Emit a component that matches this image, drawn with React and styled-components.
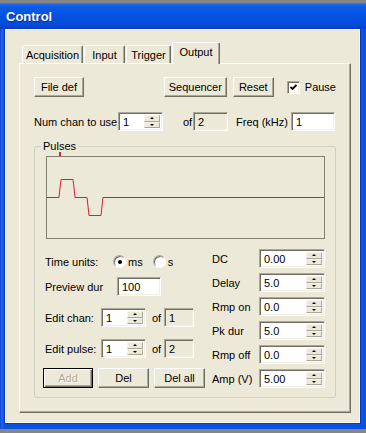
import React from "react";
import styled, { createGlobalStyle, css } from "styled-components";

const FONT = `"Liberation Sans", Arial, sans-serif`;

const GlobalStyle = createGlobalStyle`
  html, body {
    margin: 0;
    padding: 0;
    background: #868686;
  }
  body {
    font-family: ${FONT};
    font-size: 11px;
    color: #000;
  }
`;

const raised = css`
  border: 1px solid;
  border-color: #fff #716f64 #716f64 #fff;
  box-shadow: inset -1px -1px #aca899;
`;

const sunken = css`
  box-sizing: border-box;
  border: 1px solid;
  border-color: #aca899 #fff #fff #aca899;
  box-shadow: inset 1px 1px #716f64, inset -1px -1px #f1efe2;
`;

const Page = styled.div`
  width: 366px;
  height: 433px;
  padding-top: 3px;
  box-sizing: border-box;
  background: #868686;
`;

const TitleBar = styled.div`
  height: 26px;
  display: flex;
  align-items: center;
  padding-left: 6px;
  background: linear-gradient(
    #3679ee 0,
    #0c5ce8 3px,
    #0553e2 12px,
    #044ad9 22px,
    #0642c8 26px
  );
  color: #fff;
  font: bold 13px ${FONT};
  text-shadow: 1px 1px #0c2a9a;
`;

const Frame = styled.div`
  padding: 0 6px 6px 5px;
  background: linear-gradient(90deg, #0a47d4 0, #2466ee 2px, #0b52e2 4px);
`;

const Client = styled.div`
  background: #ece9d8;
  border: 1px solid #fbfaf4;
  box-shadow: 0 0 0 1px #0a39c0;
  padding: 12px 7px 9px 13px;
`;

const TabStrip = styled.div`
  display: flex;
  align-items: flex-end;
  gap: 1px;
  height: 21px;
  padding-left: 3px;
`;

const Tab = styled.div`
  box-sizing: border-box;
  width: ${(p) => p.$w}px;
  height: 18px;
  display: flex;
  align-items: center;
  justify-content: center;
  background: #ece9d8;
  border: 1px solid;
  border-bottom: none;
  border-color: #fff #716f64 transparent #fff;
  border-radius: 2px 2px 0 0;
  box-shadow: inset -1px 0 #aca899;
  white-space: nowrap;

  ${(p) =>
    p.$active &&
    css`
      position: relative;
      z-index: 1;
      height: 22px;
      margin-bottom: -1px;
      padding-bottom: 3px;
    `}
`;

const Panel = styled.div`
  box-sizing: border-box;
  width: 332px;
  ${raised}
  padding: 13px 14px 14px 14px;
`;

const Row = styled.div`
  display: flex;
  align-items: center;
  height: ${(p) => p.$h || 19}px;
  margin-top: ${(p) => p.$mt || 0}px;
`;

const Label = styled.span`
  display: inline-block;
  width: ${(p) => (p.$w ? `${p.$w}px` : "auto")};
  margin-left: ${(p) => p.$ml || 0}px;
  white-space: nowrap;
`;

const Button = styled.button`
  box-sizing: border-box;
  width: ${(p) => p.$w}px;
  height: 20px;
  padding: 0;
  margin-left: ${(p) => p.$ml || 0}px;
  font: 11px ${FONT};
  color: #000;
  background: #ece9d8;
  ${raised}

  &:disabled {
    color: #aca899;
    text-shadow: 1px 1px #fff;
    border-color: #000;
    box-shadow: inset 1px 1px #fff, inset -1px -1px #716f64,
      inset -2px -2px #aca899;
  }
`;

const RightGroup = styled.div`
  display: flex;
  align-items: center;
  margin-left: auto;
`;

const Check = styled.span`
  ${sunken}
  width: 13px;
  height: 13px;
  background: #fff;
  display: inline-flex;
  align-items: center;
  justify-content: center;
  margin: 0 5px 0 13px;
`;

const Field = styled.input`
  ${sunken}
  width: ${(p) => p.$w}px;
  height: 19px;
  margin: 0;
  padding: 0 0 0 4px;
  font: 11px ${FONT};
  color: #000;
  background: ${(p) => (p.readOnly ? "#ece9d8" : "#fff")};
  outline: none;
`;

const SpinBox = styled.div`
  ${sunken}
  width: ${(p) => p.$w}px;
  height: 19px;
  display: flex;
  background: #fff;
  padding: 2px;
`;

const SpinText = styled.input`
  flex: 1;
  min-width: 0;
  border: none;
  margin: 0;
  padding: 0 0 0 2px;
  font: 11px ${FONT};
  background: transparent;
  outline: none;
`;

const SpinButtons = styled.div`
  width: 16px;
  display: flex;
  flex-direction: column;
`;

const SpinBtn = styled.div`
  flex: 1;
  display: flex;
  align-items: center;
  justify-content: center;
  background: #ece9d8;
  border: 1px solid;
  border-color: #f4f3ee #aca899 #aca899 #f4f3ee;
`;

const Arrow = styled.span`
  width: 0;
  height: 0;
  border-left: 2px solid transparent;
  border-right: 2px solid transparent;
  ${(p) =>
    p.$down
      ? css`
          border-top: 2px solid #000;
        `
      : css`
          border-bottom: 2px solid #000;
        `}
`;

const Group = styled.section`
  position: relative;
  margin-top: 15px;
  padding: 9px 10px 9px 11px;
  border: 1px solid #d0d0bf;
  border-radius: 3px;
`;

const GroupTitle = styled.span`
  position: absolute;
  top: -7px;
  left: 6px;
  padding: 0 2px;
  line-height: 13px;
  background: #ece9d8;
`;

const Graph = styled.div`
  position: relative;
  box-sizing: border-box;
  height: 83px;
  border: 1px solid #84806f;

  svg {
    display: block;
  }
`;

const Marker = styled.span`
  position: absolute;
  left: 12px;
  top: -5px;
  width: 2px;
  height: 4px;
  background: #c4283c;
`;

const Lower = styled.div`
  display: flex;
  margin-top: 10px;
`;

const LeftCol = styled.div`
  width: 167px;
  margin-left: -1px;
  display: flex;
  flex-direction: column;
`;

const RightCol = styled.div`
  display: grid;
  grid-template-columns: 47px 66px;
  grid-auto-rows: 19px;
  row-gap: 5px;
  align-items: center;
`;

const Radio = styled.span`
  box-sizing: border-box;
  width: 13px;
  height: 13px;
  margin: 0 2px 0 ${(p) => p.$ml || 0}px;
  border-radius: 50%;
  border: 1px solid;
  border-color: #aca899 #fff #fff #aca899;
  box-shadow: inset 1px 1px #716f64;
  background: #fff;
  display: inline-flex;
  align-items: center;
  justify-content: center;

  &::after {
    content: "";
    width: 4px;
    height: 4px;
    border-radius: 50%;
    background: ${(p) => (p.$on ? "#000" : "transparent")};
  }
`;

const ButtonRow = styled.div`
  display: flex;
  gap: 5px;
  margin: 10px 0 0 -2px;
`;

const Spin = ({ w, value }) => (
  <SpinBox $w={w}>
    <SpinText defaultValue={value} />
    <SpinButtons>
      <SpinBtn>
        <Arrow />
      </SpinBtn>
      <SpinBtn>
        <Arrow $down />
      </SpinBtn>
    </SpinButtons>
  </SpinBox>
);

const params = [
  ["DC", "0.00"],
  ["Delay", "5.0"],
  ["Rmp on", "0.0"],
  ["Pk dur", "5.0"],
  ["Rmp off", "0.0"],
  ["Amp (V)", "5.00"],
];

const trace =
  "0,40.5 12,40.5 13,31 14,22.5 26,22.5 27,31 28,40.5 40,40.5 41,49 42,58.5 54,58.5 55,49 56,40.5 277,40.5";

export default function App() {
  return (
    <Page>
      <GlobalStyle />
      <TitleBar>Control</TitleBar>
      <Frame>
        <Client>
          <TabStrip>
            <Tab $w={61}>Acquisition</Tab>
            <Tab $w={41}>Input</Tab>
            <Tab $w={45}>Trigger</Tab>
            <Tab $w={48} $active>
              Output
            </Tab>
          </TabStrip>
          <Panel>
            <Row $h={20}>
              <Button $w={50}>File def</Button>
              <RightGroup>
                <Button $w={63}>Sequencer</Button>
                <Button $w={41} $ml={6}>
                  Reset
                </Button>
                <Check>
                  <svg width="7" height="7" viewBox="0 0 7 7">
                    <polyline
                      points="0.5,3 2.5,5 6.5,1"
                      fill="none"
                      stroke="#000"
                      strokeWidth="1.8"
                    />
                  </svg>
                </Check>
                <Label>Pause</Label>
              </RightGroup>
            </Row>
            <Row $mt={15}>
              <Label $w={84}>Num chan to use</Label>
              <Spin w={45} value="1" />
              <Label $w={10} $ml={20}>
                of
              </Label>
              <Field $w={35} readOnly defaultValue="2" />
              <Label $w={55} $ml={8}>
                Freq (kHz)
              </Label>
              <Field $w={44} defaultValue="1" />
            </Row>
            <Group>
              <GroupTitle>Pulses</GroupTitle>
              <Graph>
                <Marker />
                <svg width="277" height="81" viewBox="0 0 277 81">
                  <polyline
                    points={trace}
                    fill="none"
                    stroke="#e01b34"
                    strokeWidth="1"
                  />
                </svg>
              </Graph>
              <Lower>
                <LeftCol>
                  <Row $mt={3}>
                    <Label $w={68}>Time units:</Label>
                    <Radio $on />
                    <Label>ms</Label>
                    <Radio $ml={10} />
                    <Label>s</Label>
                  </Row>
                  <Row $mt={6}>
                    <Label $w={72}>Preview dur</Label>
                    <Field $w={44} defaultValue="100" />
                  </Row>
                  <Row $mt={12}>
                    <Label $w={56}>Edit chan:</Label>
                    <Spin w={45} value="1" />
                    <Label $w={12} $ml={6}>
                      of
                    </Label>
                    <Field $w={30} readOnly defaultValue="1" />
                  </Row>
                  <Row $mt={12}>
                    <Label $w={56}>Edit pulse:</Label>
                    <Spin w={45} value="1" />
                    <Label $w={12} $ml={6}>
                      of
                    </Label>
                    <Field $w={30} readOnly defaultValue="2" />
                  </Row>
                  <ButtonRow>
                    <Button $w={50} disabled>
                      Add
                    </Button>
                    <Button $w={51}>Del</Button>
                    <Button $w={51}>Del all</Button>
                  </ButtonRow>
                </LeftCol>
                <RightCol>
                  {params.map(([name, value]) => (
                    <React.Fragment key={name}>
                      <Label>{name}</Label>
                      <Spin w={66} value={value} />
                    </React.Fragment>
                  ))}
                </RightCol>
              </Lower>
            </Group>
          </Panel>
        </Client>
      </Frame>
    </Page>
  );
}
